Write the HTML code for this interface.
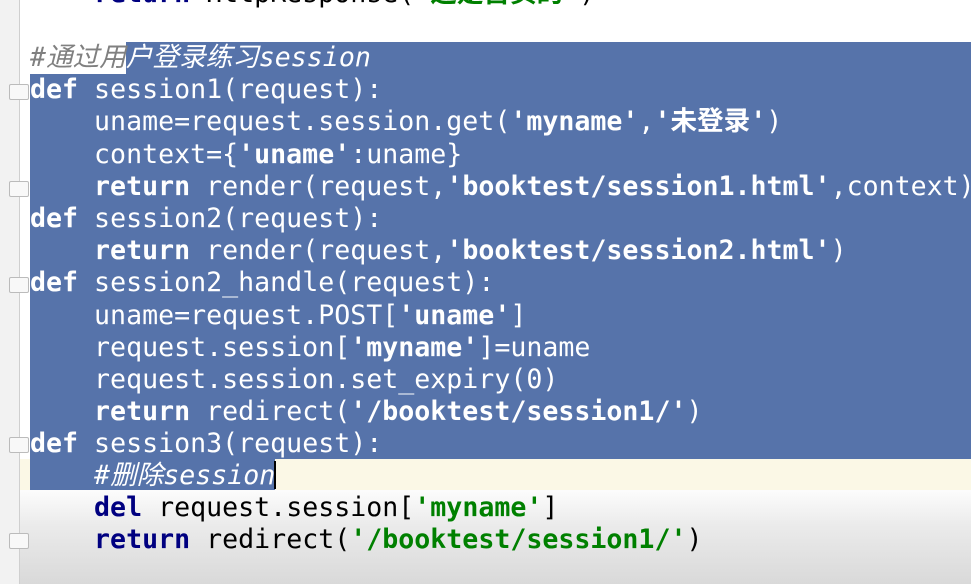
<!DOCTYPE html>
<html><head><meta charset="utf-8"><style>
body{margin:0;width:971px;height:584px;overflow:hidden;background:#fff;position:relative;font-family:"DejaVu Sans Mono","Noto Sans CJK SC",monospace;font-size:26.6px;}
.bg{position:absolute;left:0;top:0;width:971px;height:584px;background:linear-gradient(#fff 0,#fff 485px,#ebebeb 525px,#d9d9d9 584px);}
.gut{position:absolute;left:0;top:0;width:19px;height:584px;background:#f2f2f2;border-right:1px solid #cfcfcf;}
.sel{position:absolute;background:#5673aa;}
.ln{position:absolute;left:30px;white-space:pre;height:32px;line-height:32px;color:#fff;}
.k{font-weight:bold;}
.s{font-weight:bold;}
.c{font-style:italic;}
.dk{color:#000080;font-weight:bold;}
.ds{color:#008000;font-weight:bold;}
.fold{position:absolute;left:9px;width:18px;height:14px;border:1px solid #bbb;background:#f8f8f8;border-radius:2px;}
</style></head><body>
<div class="bg"></div>
<div style="position:absolute;left:0;top:459px;width:971px;height:31px;background:#fbf8e6;"></div>
<div class="sel" style="left:126px;top:42px;width:845px;height:32px;"></div>
<div class="sel" style="left:30px;top:74px;width:941px;height:385px;"></div>
<div class="sel" style="left:30px;top:459px;width:245px;height:31px;"></div>
<div style="position:absolute;left:274px;top:461px;width:2px;height:28px;background:#000"></div>
<div class="gut"></div>
<div class="fold" style="top:84px"></div>
<div class="fold" style="top:181px"></div>
<div class="fold" style="top:277px"></div>
<div class="fold" style="top:437px"></div>
<div class="fold" style="top:533px"></div>
<div class="ln" style="top:-22px;color:#000"><span class="dk">    return</span> HttpResponse(<span class="ds">'这是首页的'</span>)</div>
<div class="ln c" style="top:42px;color:#fff"><span style="color:#808080">#通过用</span>户登录练习session</div>
<div class="ln" style="top:74px"><span class="k">def</span> session1(request):</div>
<div class="ln" style="top:106px">    uname=request.session.get(<span class="s">'myname'</span>,<span class="s">'未登录'</span>)</div>
<div class="ln" style="top:139px">    context={<span class="s">'uname'</span>:uname}</div>
<div class="ln" style="top:171px">    <span class="k">return</span> render(request,<span class="s">'booktest/session1.html'</span>,context)</div>
<div class="ln" style="top:203px"><span class="k">def</span> session2(request):</div>
<div class="ln" style="top:235px">    <span class="k">return</span> render(request,<span class="s">'booktest/session2.html'</span>)</div>
<div class="ln" style="top:267px"><span class="k">def</span> session2_handle(request):</div>
<div class="ln" style="top:300px">    uname=request.POST[<span class="s">'uname'</span>]</div>
<div class="ln" style="top:332px">    request.session[<span class="s">'myname'</span>]=uname</div>
<div class="ln" style="top:364px">    request.session.set_expiry(0)</div>
<div class="ln" style="top:396px">    <span class="k">return</span> redirect(<span class="s">'/booktest/session1/'</span>)</div>
<div class="ln" style="top:428px"><span class="k">def</span> session3(request):</div>
<div class="ln c" style="top:460px">    #删除session</div>
<div class="ln" style="top:492px;color:#000">    <span class="dk">del</span> request.session[<span class="ds">'myname'</span>]</div>
<div class="ln" style="top:524px;color:#000">    <span class="dk">return</span> redirect(<span class="ds">'/booktest/session1/'</span>)</div>
</body></html>
